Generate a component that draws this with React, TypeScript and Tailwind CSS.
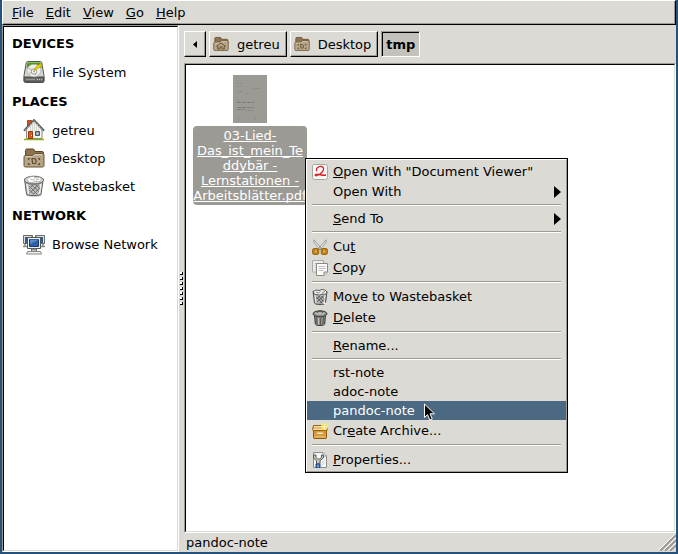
import type { ReactNode } from "react";

const RAISED =
  "border border-t-white border-l-white border-b-black border-r-black shadow-[inset_-1px_-1px_0_#9c9a94]";
const SUNKEN_OUTER = "border border-t-[#9c9a94] border-l-[#9c9a94] border-b-white border-r-white";
const SUNKEN_INNER = "border border-t-black border-l-black border-b-[#dcdad5] border-r-[#dcdad5]";
const UNDERLINE = "underline decoration-1 underline-offset-1 [text-decoration-skip-ink:none]";

/* Text with one underlined access key, marked by a leading underscore. */
function Mnemonic({ text }: { text: string }) {
  const i = text.indexOf("_");
  if (i < 0) return <>{text}</>;
  return (
    <>
      {text.slice(0, i)}
      <span className={UNDERLINE}>{text[i + 1]}</span>
      {text.slice(i + 2)}
    </>
  );
}

function DriveIcon() {
  return (
    <svg className="size-[22px]" viewBox="0 0 22 22" aria-hidden="true">
      <path d="M4.500.5h13q1 0 1.200 1l2.300 13v5.500q0 1.500-1.500 1.500H2.500q-1.500 0-1.500-1.500v-5.500L3.300 1.500q.2-1 1.200-1z" fill="#d3d7cf" stroke="#555753" />
      <path d="M1.200 16h19.600v3.700q0 1.300-1.300 1.300h-17q-1.300 0-1.300-1.300z" fill="#6b6d69" stroke="#454743" />
      <path d="M4.500 1.500h13l1 5.500H3.500z" fill="#4a9a12" />
      <ellipse cx="11" cy="9.500" rx="7" ry="6.300" fill="#eeeeec" stroke="#aaaca7" strokeWidth=".8" />
      <path d="M5.500 7l3.500 2M6.500 13l3-2.500M13 14l-1-3" stroke="#b6b8b3" strokeWidth="1.200" />
      <circle cx="11" cy="10.500" r="2.700" fill="#fff" stroke="#888a85" strokeWidth=".9" />
      <circle cx="11" cy="10.500" r="1" fill="#a6a8a3" />
      <path d="M17.500 2.500l1 3-4 2-3.500 2.500 1.200-3.500z" fill="#edd400" stroke="#b39400" strokeWidth=".6" />
      <path d="M3 18.500h9" stroke="#92948f" />
      <path d="M14 18.500h5" stroke="#c6c8c3" strokeDasharray="1 1" />
    </svg>
  );
}

function HomeIcon() {
  return (
    <svg className="size-[22px]" viewBox="0 0 22 22" aria-hidden="true">
      <path d="M1 20.500h20" stroke="#8ab300" strokeWidth="1.500" />
      <path d="M4.500 1.500h4v7l-4 2.500z" fill="#d9541e" stroke="#8f2d0c" strokeWidth=".8" />
      <path d="M3.500 9.500L11 2l8 8v9.500H3.500z" fill="#f5f5f3" stroke="#888a85" />
      <path d="M7.500 7v5M9.500 5v7M11.500 4v8M13.500 6v6M15.500 8v4" stroke="#d3d7cf" />
      <path d="M1 11.800L11 1.200l10 10.600" fill="none" stroke="#555753" strokeWidth="2" />
      <path d="M2 11.200L11 1.800l9 9.400" fill="none" stroke="#e8e8e6" strokeWidth=".8" strokeDasharray="1.500 1" />
      <path d="M5.500 12.500h4v7h-4z" fill="#df5a1c" stroke="#99340e" />
      <path d="M8.500 16v1" stroke="#fff" />
      <path d="M12.500 12.500h4v4h-4z" fill="#8f9bab" stroke="#555753" />
      <path d="M13.500 14.500h2M14.500 13.500v2" stroke="#d6dbe2" strokeWidth=".6" />
    </svg>
  );
}

function FolderIcon({ kind, small = false }: { kind: "desktop" | "home"; small?: boolean }) {
  return (
    <svg className={small ? "size-4 shrink-0" : "size-[22px]"} viewBox="0 0 22 22" aria-hidden="true">
      <path d="M2.500 3.500q0-1.500 1.500-1.500h6q1 0 1.300 1l.4 1.500h7.300q1.500 0 1.500 1.500v4h-18z" fill="#8f7350" stroke="#5e4522" />
      <path d="M2.500 8.500h7l2-2h8q1.500 0 1.500 1.500v10.500q0 1.500-1.500 1.500h-17Q1 20 1 18.500V10q0-1.500 1.500-1.500z" fill="#b5a58a" stroke="#6b5230" />
      <path d="M2.500 9.700h7.300l2-2h7.500" fill="none" stroke="#ded3be" />
      {kind === "desktop" ? (
        <g fill="none" stroke="#654c2b" strokeWidth="1.200">
          <path d="M5.500 13v-1.500H7M15 11.500h1.500V13M5.500 16v1.500H7M15 17.500h1.500V16" />
          <path d="M9 11.500h2.500l1.500 1.500v2.500q0 1-1 1H9.600z" />
        </g>
      ) : (
        <g fill="none" stroke="#654c2b" strokeWidth="1.300">
          <path d="M4.500 14.500L11 9.500l6.500 5" />
          <path d="M6.500 14v4h3v-3h3v3h3v-4" />
        </g>
      )}
    </svg>
  );
}

function TrashIcon() {
  return (
    <svg className="size-[22px]" viewBox="0 0 22 22" aria-hidden="true">
      <ellipse cx="11" cy="20" rx="8" ry="1.800" fill="#c4c5c1" />
      <path d="M1.500 4l2 15q.2 1.500 7 1.500t7.500-1.500l2.300-15z" fill="#bfc1bd" stroke="#5c5e5a" />
      <path d="M4 9l1.500 10M18 9l-1.500 10" stroke="#f3f3f2" strokeWidth="1.300" />
      <path d="M6 11l8 8M6.500 15l4 4M8 9.500l8 7M12 9.500l5 4M6.500 18L16 9.500M6 14l5-5M10 19.500l7-6.500" stroke="#666864" strokeWidth=".9" />
      <ellipse cx="11" cy="5" rx="9.500" ry="3.800" fill="#dededc" stroke="#6b6d69" />
      <path d="M4 4.500L6.500 2l4-.5L13 3l4-1 1.500 3-2.500 2-4-1-3 2-3.500-1z" fill="#fff" stroke="#a0a29e" strokeWidth=".8" />
      <path d="M7 4l3 1 2-1.500M13 5l3-1" fill="none" stroke="#b5b7b3" />
      <path d="M2.500 7.500q8 4 17 0" fill="none" stroke="#7b7d79" />
    </svg>
  );
}

function SmallTrashIcon() {
  return (
    <svg className="size-4" viewBox="0 0 16 16" aria-hidden="true">
      <path d="M1 2.500l1.500 11.500q.2 1.500 5.500 1.500t5.500-1.500L15 2.500z" fill="#b4b6b2" stroke="#4c4e4a" />
      <path d="M3 6l1 8M13 6l-1 7" stroke="#eeeeec" />
      <path d="M4.500 8l5.500 6M6.500 7l5 5.500M9.500 7l2.500 2.500M5 13l6.500-6M4.500 10l3-3M8 14.500l4-4" stroke="#4c4e4a" strokeWidth=".9" />
      <path d="M1 2.500L4 1l3 .5L10 .5l3 .5 2 2-1.500 2.500-3-.5-3 1L3 5.500z" fill="#eeeeec" stroke="#5c5e5a" />
      <path d="M4 3l2.500 1 2-1.500M10 4l3-1.500" fill="none" stroke="#888a85" />
      <path d="M11 13.500l3.500 1.500" stroke="#eeeeec" strokeWidth="1.500" />
    </svg>
  );
}

function NetworkIcon() {
  return (
    <svg className="h-[22px] w-6" viewBox="0 0 24 22" aria-hidden="true">
      <path d="M1.500 2.500h9v8h-9zM13.500 2.500h9v8h-9z" fill="#2c5c9a" stroke="#6a6c68" />
      <path d="M2.500 3.500h7M14.500 3.500h7M2.500 3v7M21.500 3v7" stroke="#e0e1de" />
      <path d="M3 11v2M1 13.500h6M21 11v2M17 13.500h6" stroke="#888a85" strokeWidth="1.500" />
      <path d="M5.500 4.500h13v11h-13z" fill="#eeeeec" stroke="#555753" />
      <path d="M7.500 6.500h9v7h-9z" fill="#2a60ae" stroke="#15396f" />
      <path d="M8 11l8-4v-.5H8z" fill="#5a89c8" />
      <path d="M9.500 16h5v2.500h-5z" fill="#b9bbb7" stroke="#6a6c68" />
      <path d="M5.500 18.500h13l1 2.500h-15z" fill="#eeeeec" stroke="#888a85" />
    </svg>
  );
}

function ViewerIcon() {
  return (
    <svg className="size-4" viewBox="0 0 16 16" aria-hidden="true">
      <rect x=".5" y=".5" width="15" height="15" rx="2" fill="#f8f8f7" stroke="#a5a6a2" />
      <path d="M5 7C3 5 6.500 2 9.500 2.500s2.500 3.500.5 5.700S4.500 12.500 3.300 11.500c-1-1 2-1.500 4.200-1s4 1.200 6.500.5" fill="none" stroke="#dc1f26" strokeWidth="1.300" />
    </svg>
  );
}

function CutIcon() {
  return (
    <svg className="size-4" viewBox="0 0 16 16" aria-hidden="true">
      <path d="M2 .8l7.500 9-1.500 1L2 3.500zM14 .8l-7.500 9 1.500 1 6-7.300z" fill="#eeeeec" stroke="#888a85" strokeWidth=".8" />
      <rect x="1.200" y="10.200" width="5" height="4.600" rx="1.500" fill="#dbb060" stroke="#8f5902" strokeWidth="2.200" />
      <rect x="9.800" y="10.200" width="5" height="4.600" rx="1.500" fill="#dbb060" stroke="#8f5902" strokeWidth="2.200" />
      <rect x="1.200" y="10.200" width="5" height="4.600" rx="1.500" fill="none" stroke="#d99321" />
      <rect x="9.800" y="10.200" width="5" height="4.600" rx="1.500" fill="none" stroke="#d99321" />
    </svg>
  );
}

function CopyIcon() {
  return (
    <svg className="size-4" viewBox="0 0 16 16" aria-hidden="true">
      <rect x=".5" y=".5" width="11" height="11.500" rx=".5" fill="#ededeb" stroke="#a9aba6" />
      <path d="M2.500 3.500h6M2.500 5.500h2M2.500 7.500h2M2.500 9.500h2" stroke="#c9cac7" />
      <path d="M4.500 3.500h11v8.500l-3.500 3.500H4.500z" fill="#fafaf9" stroke="#888a85" />
      <path d="M6.500 6.500h7M6.500 8.500h7M6.500 10.500h5" stroke="#bfc0bd" />
      <path d="M12 15.500v-3.500h3.500" fill="#dedfdc" stroke="#888a85" />
    </svg>
  );
}

function DeleteIcon() {
  return (
    <svg className="size-4" viewBox="0 0 16 16" aria-hidden="true">
      <path d="M2.500 5l.8 9q.2 1.500 4.700 1.500t4.700-1.500l.8-9z" fill="#8a8c88" stroke="#3a3c39" />
      <path d="M4.500 7l.5 7M8.500 8v7M11.500 7l-.5 7" stroke="#5c5e5a" />
      <path d="M6.500 8l.2 6.500" stroke="#c6c8c3" />
      <ellipse cx="8" cy="3.800" rx="7" ry="3" fill="#8a8c88" stroke="#3a3c39" />
      <ellipse cx="8" cy="3.300" rx="4.800" ry="1.500" fill="#b8bab6" />
      <path d="M5.500 3q0-2 2.500-2t2.500 2" fill="none" stroke="#484a46" />
    </svg>
  );
}

function ArchiveIcon() {
  return (
    <svg className="size-4" viewBox="0 0 16 16" aria-hidden="true">
      <path d="M1.500 6.500h13v7.500l-.5 1.500H2L1.500 14z" fill="#d89a3a" stroke="#8f5902" />
      <path d="M1.500 2.500h13l1 4-.5 1H1l-.5-1z" fill="#e9b96e" stroke="#995f0a" />
      <path d="M2 3.500h12M1.500 6.500h13" stroke="#fbe2b5" />
      <path d="M5 9.500h6v1.500H5z" fill="#f7e3bd" />
      <path d="M2.500 14h11" stroke="#efc98a" />
      <circle cx="12.500" cy="3.500" r="3.500" fill="#fce94f" fillOpacity=".85" />
      <path d="M12.500.5v6M9.500 3.500h6" stroke="#fffbd0" />
    </svg>
  );
}

function PropertiesIcon() {
  return (
    <svg className="size-4" viewBox="0 0 16 16" aria-hidden="true">
      <path d="M1.500.5H11L14.500 4v11.500h-13z" fill="#f6f6f5" stroke="#8a8c87" />
      <path d="M11 .5V4h3.500" fill="#d6d7d4" stroke="#9a9c98" />
      <path d="M1.500 3v3l3 2.700v3.300h3.500V8.700l3.500-2.700V3.500L9.500 3v2.500L7.500 7h-2L4 5.500V3z" fill="#c6c8c3" stroke="#555753" />
      <path d="M4 12h4v3.500H4z" fill="#3465a4" stroke="#204a87" />
      <path d="M6 12.500v3" stroke="#a7c1e3" />
      <path d="M9.500 11l2.500-2.500M9.500 13.500l3-3" stroke="#c9cac7" />
    </svg>
  );
}

type Place = { label: string; icon: ReactNode };
const sections: { title: string; places: Place[] }[] = [
  { title: "DEVICES", places: [{ label: "File System", icon: <DriveIcon /> }] },
  {
    title: "PLACES",
    places: [
      { label: "getreu", icon: <HomeIcon /> },
      { label: "Desktop", icon: <FolderIcon kind="desktop" /> },
      { label: "Wastebasket", icon: <TrashIcon /> },
    ],
  },
  { title: "NETWORK", places: [{ label: "Browse Network", icon: <NetworkIcon /> }] },
];

type Item = { label: string; icon?: ReactNode; submenu?: boolean; active?: boolean };
const groups: Item[][] = [
  [
    { label: '_Open With "Document Viewer"', icon: <ViewerIcon /> },
    { label: "Open With", submenu: true },
  ],
  [{ label: "_Send To", submenu: true }],
  [
    { label: "Cu_t", icon: <CutIcon /> },
    { label: "_Copy", icon: <CopyIcon /> },
  ],
  [
    { label: "Mo_ve to Wastebasket", icon: <SmallTrashIcon /> },
    { label: "_Delete", icon: <DeleteIcon /> },
  ],
  [{ label: "_Rename..." }],
  [
    { label: "rst-note" },
    { label: "adoc-note" },
    { label: "pandoc-note", active: true },
    { label: "Cr_eate Archive...", icon: <ArchiveIcon /> },
  ],
  [{ label: "_Properties...", icon: <PropertiesIcon /> }],
];

function ContextMenu() {
  return (
    <div role="menu" className="absolute top-[93px] left-[119px] w-[263px] border border-black bg-[#dcdad5]">
      <div className="border border-t-white border-l-white border-b-[#9c9a94] border-r-[#9c9a94] py-px">
        {groups.map((group, g) => (
          <div key={g}>
            {g > 0 && (
              <div role="separator" className="flex h-2 items-center px-[5px]">
                <div className="h-[2px] w-full border-t border-b border-t-[#9c9a94] border-b-white" />
              </div>
            )}
            {group.map((item) => (
              <button
                key={item.label}
                role="menuitem"
                className={`flex w-full items-center px-[5px] text-left ${item.icon ? "h-[21px]" : "h-[19px]"} ${
                  item.active ? "bg-[#4b6983] text-white" : ""
                }`}
              >
                <span className="w-[21px]">{item.icon}</span>
                <span className="flex-1 whitespace-nowrap">
                  <Mnemonic text={item.label} />
                </span>
                {item.submenu && (
                  <svg className="h-3 w-[7px]" viewBox="0 0 7 12" aria-hidden="true">
                    <path d="M0 0l7 6-7 6z" fill="#000" />
                  </svg>
                )}
              </button>
            ))}
          </div>
        ))}
      </div>
    </div>
  );
}

function Thumbnail() {
  return (
    <svg className="h-12 w-[34px]" viewBox="0 0 34 48" aria-hidden="true">
      <path d="M0 0h34v48H0z" fill="#9c9a94" />
      <g stroke="#8b8983" strokeDasharray="2 1">
        <path d="M4 8.500h5M4 11.500h4M20 13.500h7M4 16.500h5M13 18.500h3M4 25.500h3M12 35.500h8M4 43.500h4M21 43.500h2M30 42.500h2" />
      </g>
      <g stroke="#7f7d77" strokeDasharray="4 1">
        <path d="M4 27.500h17M4 32.500h17M4 34.500h7" />
      </g>
    </svg>
  );
}

export default function App() {
  return (
    <div className="flex min-h-screen flex-col border-x-2 border-b-2 border-[#26527a] bg-[#dcdad5] font-['DejaVu_Sans',sans-serif] text-[13px] leading-[15px] text-black">
      <nav aria-label="Menu bar" className={`flex h-[25px] items-center px-[3px] ${RAISED}`}>
        {["_File", "_Edit", "_View", "_Go", "_Help"].map((label) => (
          <button key={label} className="px-[6px]">
            <Mnemonic text={label} />
          </button>
        ))}
      </nav>

      <div className="flex flex-1">
        <aside className={`flex w-[177px] shrink-0 ${SUNKEN_OUTER}`}>
          <div className={`flex-1 bg-white pt-px ${SUNKEN_INNER}`}>
            {sections.map((section) => (
              <section key={section.title}>
                <h2 className="flex h-[30px] items-center px-2 font-bold">{section.title}</h2>
                {section.places.map((place) => (
                  <button key={place.label} className="flex h-7 w-full items-center gap-[6px] pl-[18px] text-left">
                    <span className="flex w-6 justify-center">{place.icon}</span>
                    {place.label}
                  </button>
                ))}
              </section>
            ))}
          </div>
        </aside>

        <div role="separator" className="flex w-[5px] shrink-0 flex-col items-center justify-center gap-[2px]">
          {[0, 1, 2, 3, 4, 5, 6].map((dot) => (
            <span key={dot} className="size-[3px] border-r border-b border-black bg-white" />
          ))}
        </div>

        <main className="flex min-w-0 flex-1 flex-col">
          <div className="flex items-center gap-[3px] pt-[6px] pb-[6px]">
            <button aria-label="Scroll path left" className={`flex h-[26px] w-[22px] items-center justify-center ${RAISED}`}>
              <svg className="h-[7px] w-1" viewBox="0 0 4 7" aria-hidden="true">
                <path d="M4 0v7L0 3.500z" fill="#000" />
              </svg>
            </button>
            <button className={`flex h-[26px] items-center gap-2 pr-[6px] pl-[3px] ${RAISED}`}>
              <FolderIcon kind="home" small />
              getreu
            </button>
            <button className={`flex h-[26px] items-center gap-2 pr-[6px] pl-[3px] ${RAISED}`}>
              <FolderIcon kind="desktop" small />
              Desktop
            </button>
            <button
              aria-pressed="true"
              className="h-[26px] border border-t-[#9c9a94] border-r-white border-b-white border-l-[#9c9a94] bg-[#c4c2bd] px-1 font-bold shadow-[inset_1px_1px_0_#000]"
            >
              tmp
            </button>
          </div>

          <div className={`flex flex-1 ${SUNKEN_OUTER}`}>
            <div className={`relative flex-1 bg-white ${SUNKEN_INNER}`}>
              <div className="flex w-32 flex-col items-center gap-[3px] pt-[10px]">
                <Thumbnail />
                <div className={`w-[114px] rounded bg-[#9c9a94] py-[2px] text-center whitespace-nowrap text-white ${UNDERLINE}`}>
                  03-Lied-
                  <br />
                  Das_ist_mein_Te
                  <br />
                  ddybär -
                  <br />
                  Lernstationen -
                  <br />
                  Arbeitsblätter.pdf
                </div>
              </div>
              <ContextMenu />
              <svg className="absolute top-[338px] left-[238px] h-[18px] w-3" viewBox="0 0 12 18" aria-hidden="true">
                <path d="M.5 1v13.500l3-2.800 2.300 5.300 2.500-1-2.300-5.200h4.500z" fill="#000" stroke="#fff" />
              </svg>
            </div>
          </div>

          <footer className="flex h-[19px] items-center justify-between pl-[2px]">
            <span>pandoc-note</span>
            <svg className="size-[17px]" viewBox="0 0 17 17" aria-hidden="true">
              <path d="M1 17L17 1M6 17L17 6M11 17l6-6" stroke="#9c9a94" strokeWidth="2" />
              <path d="M0 16L16 0M5 16L17 4M10 16l7-7" stroke="#fff" />
            </svg>
          </footer>
        </main>
      </div>
    </div>
  );
}
